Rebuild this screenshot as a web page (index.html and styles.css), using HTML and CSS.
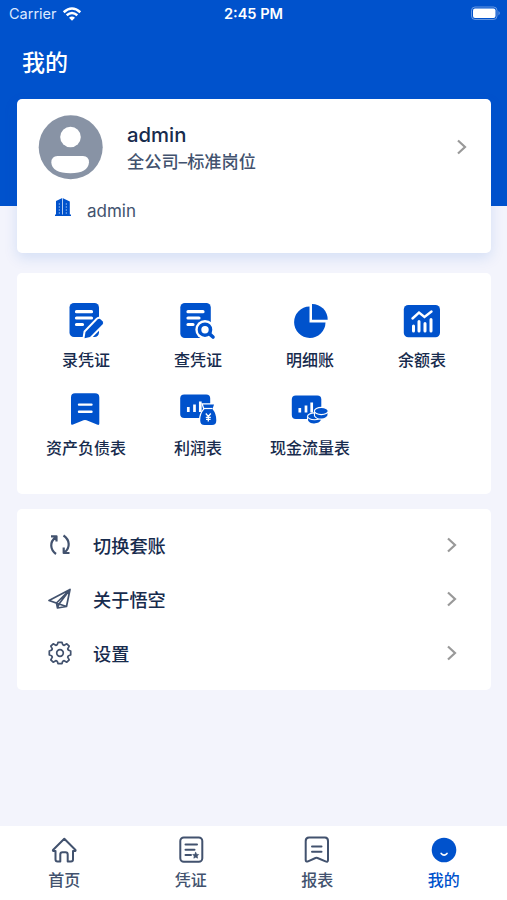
FILE: index.html
```html
<!DOCTYPE html>
<html lang="zh-CN">
<head>
<meta charset="utf-8">
<meta name="viewport" content="width=device-width, initial-scale=1">
<title>我的</title>
<link rel="stylesheet" href="styles.css">
</head>
<body>
<div class="screen">
  <div class="status">
    <div class="carrier"><span>Carrier</span>
      <svg width="20" height="16" viewBox="61 5 20 16" fill="none" stroke="#fff" stroke-width="2.5"><path d="M62.7 11.3Q71 3.8 79.300 11.300M65.700 14.300Q71 9.700 76.300 14.300"/><path d="M68 16.700Q71 14.300 74 16.700L71 19.700Z" fill="#fff" stroke="none"/></svg>
    </div>
    <div class="time">2:45 PM</div>
    <svg class="battery" width="31" height="15" viewBox="470 6 31 15"><rect x="471.500" y="7" width="25.500" height="12.500" rx="3.500" fill="none" stroke="#fff" stroke-opacity=".4"/><rect x="473" y="8.500" width="22.500" height="9.500" rx="2" fill="#fff"/><path d="M498.500 11Q501 13 498.500 15.500Z" fill="#fff" fill-opacity=".45"/></svg>
  </div>
  <h1 class="title">我的</h1>

  <section class="card profile">
    <div class="person">
      <svg class="avatar" width="66" height="66" viewBox="38 114 66 66"><circle cx="70.700" cy="147.300" r="32" fill="#8893a5"/><circle cx="70.500" cy="137" r="10.300" fill="#fff"/><path d="M57.500 156H83Q89 156 89 162.500Q88 173.200 70.500 173.200Q52 173.200 51.300 162.500Q51.500 156 57.500 156Z" fill="#fff"/></svg>
      <div class="who"><div class="name">admin</div><div class="role">全公司–标准岗位</div></div>
      <svg class="chev" width="14" height="18" viewBox="0 0 14 18"><path d="M3 2.500L10 9L3 15.500"/></svg>
    </div>
    <div class="company">
      <svg width="18" height="20" viewBox="54 197 18 20" fill="#0052cc"><path d="M56 215.500V201L62.300 198V215.500ZM63 215.500V198.200L69.800 201.500V215.500Z"/><path d="M55 214.500H71V216H55Z"/><path d="M59.300 203V214M66.300 203V214" stroke="#8db5f0" stroke-width=".8" stroke-dasharray="2 1"/></svg>
      <span>admin</span>
    </div>
  </section>

  <section class="card apps">
    <div class="app"><svg viewBox="66 301 40 40"><rect x="69.500" y="303" width="29.500" height="34" rx="4.500" fill="#0052cc"/><path d="M76.500 311.700H91.500M76.500 318H91.500M76.500 324.500H82.500" stroke="#fff" stroke-width="3.200" stroke-linecap="round"/><path d="M84.500 338.300L85.500 332L97.500 319.500Q99.300 318 101 319.700L102.500 321.300Q104 323 102.400 324.600L90 337Z" fill="#0052cc" stroke="#fff" stroke-width="4" paint-order="stroke"/></svg><span>录凭证</span></div>
    <div class="app"><svg viewBox="178 301 40 40"><rect x="180.300" y="303" width="30.500" height="35" rx="4.500" fill="#0052cc"/><path d="M188 311.700H203M188 318H199M188 324.500H193" stroke="#fff" stroke-width="3.200" stroke-linecap="round"/><circle cx="205" cy="329.700" r="9.700" fill="#fff"/><path d="M208 333L213 337.300" stroke="#fff" stroke-width="6"/><g fill="none" stroke="#0052cc" stroke-width="3.600" stroke-linecap="round"><circle cx="205" cy="329.700" r="5.500"/><path d="M209.500 333.800L213 337"/></g></svg><span>查凭证</span></div>
    <div class="app"><svg viewBox="290 301 40 40" fill="#0052cc"><path d="M309.500 306.500A15.700 15.700 0 1 0 325.500 322.500H309.500Z"/><path d="M312 304A15.500 15.500 0 0 1 327.700 319.800H312Z"/></svg><span>明细账</span></div>
    <div class="app"><svg viewBox="402 301 40 40"><rect x="403.800" y="305" width="36.200" height="32.300" rx="4.500" fill="#0052cc"/><path d="M412.500 318.500L419 312.500L424.500 317L431.500 311.500" fill="none" stroke="#fff" stroke-width="2.400" stroke-linecap="round"/><path d="M413.500 326V331M419 321.500V331M425 323.500V331M431 319.500V331" stroke="#fff" stroke-width="3" stroke-linecap="round"/></svg><span>余额表</span></div>
    <div class="app"><svg viewBox="66 389 40 40"><path d="M75 393.300H95Q99.300 393.300 99.300 397.500V423.500Q99.300 425.600 97 424.500L86.500 420.300Q85 419.700 83.500 420.300L73 424.500Q71 425.500 71 423.300V397.500Q71 393.300 75 393.300Z" fill="#0052cc"/><path d="M79 404.600H91.500M79 411.800H91.500" stroke="#fff" stroke-width="2.400" stroke-linecap="round"/></svg><span>资产负债表</span></div>
    <div class="app"><svg viewBox="178 389 40 40"><rect x="180.200" y="394.500" width="30" height="23.500" rx="4" fill="#0052cc"/><path d="M188.300 407V412M194.500 404.500V412M200.300 401.500V412" stroke="#fff" stroke-width="2.700"/><path d="M203 404.500H214L212.500 409Q216.500 414 216.300 420.500Q216.300 425 212 425H204.500Q200.300 425 200.200 420.500Q200 414 204.500 409Z" fill="#0052cc" stroke="#fff" stroke-width="2.500" paint-order="stroke"/><path d="M204 408.500H212.500" stroke="#fff" stroke-width="1.200"/><path d="M205.800 413.500L208.300 416.500L210.800 413.500M208.300 416.500V421.500M205.800 417.300H210.800M206 419.400H210.600" fill="none" stroke="#fff" stroke-width="1.300"/></svg><span>利润表</span></div>
    <div class="app"><svg viewBox="290 389 40 40"><rect x="291.800" y="395.500" width="29.500" height="23.500" rx="4" fill="#0052cc"/><path d="M299.800 408V412.500M306 405.500V412.500M311.700 402.500V412.500" stroke="#fff" stroke-width="2.700"/><g fill="#0052cc" stroke="#fff" stroke-width="1.100"><path d="M307.500 416.500V420.500C309 425.500 319.500 425 321.500 420V415Z"/><ellipse cx="314.500" cy="416.300" rx="7" ry="3.400"/><path d="M314.500 411V416C318 421 326 419.500 328 415.500V411Z"/><ellipse cx="321.300" cy="411" rx="6.900" ry="3.600"/></g></svg><span>现金流量表</span></div>
  </section>

  <section class="card menu">
    <div class="item"><svg class="ico swap" viewBox="46 532 28 28"><path d="M56 555C50 550.500 49.500 543 55.500 538.500M51 537.300H56.500V542.500M63.500 536.500C70 541 70.500 548.500 64.500 553.500M63.700 548.500V554H69.500"/></svg><span>切换套账</span><svg class="chev" width="14" height="18" viewBox="0 0 14 18"><path d="M3 2.500L10 9L3 15.500"/></svg></div>
    <div class="item"><svg class="ico" viewBox="46 586 28 28"><path d="M49 601.500L70 590.500L66.500 607.500L59 605ZM49 601.500L56.500 604L70 590.500L59 605L57.500 609L66.500 607.500M56.500 604L57.500 609"/></svg><span>关于悟空</span><svg class="chev" width="14" height="18" viewBox="0 0 14 18"><path d="M3 2.500L10 9L3 15.500"/></svg></div>
    <div class="item"><svg class="ico" viewBox="-14 -14 28 28"><path d="M-2 -10.700H2Q2.500 -7.700 4.200 -7.700L6.800 -9.200L9.200 -6.800L7.700 -4.200Q7.700 -2.500 10.700 -2V2Q7.700 2.500 7.700 4.200L9.200 6.800L6.800 9.200L4.200 7.700Q2.500 7.700 2 10.700H-2Q-2.500 7.700 -4.200 7.700L-6.800 9.200L-9.200 6.800L-7.700 4.200Q-7.700 2.500 -10.700 2V-2Q-7.700 -2.500 -7.700 -4.200L-9.200 -6.800L-6.800 -9.200L-4.200 -7.700Q-2.500 -7.700 -2 -10.700Z"/><circle r="3.300"/></svg><span>设置</span><svg class="chev" width="14" height="18" viewBox="0 0 14 18"><path d="M3 2.500L10 9L3 15.500"/></svg></div>
  </section>

  <nav class="tabs">
    <div class="tab"><svg viewBox="50 836 28 28"><path d="M64.300 838.700L53 850Q52.500 851 54 851H55.500V859.500Q55.500 861.500 57.500 861.500H60.300V854.500Q60.300 852.300 62.500 852.300H65.500Q67.700 852.300 67.700 854.500V861.500H71Q73 861.500 73 859.500V851H74.500Q76 851 75.500 850Z"/></svg><span>首页</span></div>
    <div class="tab"><svg viewBox="176 836 28 28"><rect x="179.300" y="837.500" width="22" height="24.300" rx="3.500"/><path d="M184.500 844.500H196M184.500 849.700H193.500M184.500 855H190"/><path d="M194.700 852.300L195.600 854.300L197.700 854.500L196.200 856L196.600 858.200L194.700 857.200L192.800 858.200L193.200 856L191.700 854.500L193.800 854.300Z" fill="#42526e" stroke-width=".6"/></svg><span>凭证</span></div>
    <div class="tab"><svg viewBox="303 836 28 28"><path d="M309 837.500H325Q328 837.500 328 841V860Q328 862.500 325.500 861.300L317.500 858Q316.500 857.600 315.500 858L308 861.300Q305.700 862.300 305.700 860V841Q305.700 837.500 309 837.500Z"/><path d="M312 846.500H321.500M312 851.700H321.500"/></svg><span>报表</span></div>
    <div class="tab active"><svg viewBox="429.500 836 28 28"><circle cx="443.500" cy="850" r="12.300" fill="#0052cc" stroke="none"/><path d="M440.700 853.500Q443.600 856.700 446.500 853.500" stroke="#fff" stroke-width="1.700"/></svg><span>我的</span></div>
  </nav>
</div>
</body>
</html>
```

FILE: styles.css
```css
* { box-sizing: border-box; }

body {
  margin: 0;
  font-family: Inter, "Noto Sans CJK SC", sans-serif;
  font-weight: 500;
  color: #172b4d;
}

svg { display: block; flex: none; }

.screen {
  display: flex;
  flex-direction: column;
  height: 900px;
  background: linear-gradient(#0052cc 206px, #f3f4fc 206px);
}

.status {
  display: grid;
  grid-template-columns: 1fr auto 1fr;
  align-items: center;
  height: 27px;
  padding: 0 6px 0 9px;
  color: #fff;
  font-size: 14.5px;
  line-height: 20px;
}
.carrier { display: flex; align-items: center; gap: 5px; font-weight: 400; color: #dce9ff; }
.time { margin-left: -3px; font-size: 14.6px; font-weight: 600; }
.battery { justify-self: end; }

.title {
  margin: 18px 0 0 22px;
  height: 35px;
  font-size: 23px;
  line-height: 36px;
  font-weight: 500;
  color: #fff;
}

.card {
  margin: 0 16px 0 17px;
  background: #fff;
  border-radius: 5px;
}

.profile {
  margin-top: 18.5px;
  height: 154px;
  padding: 15.5px 22px 0 21px;
  box-shadow: 0 5px 14px rgba(0, 82, 204, .13);
}
.person { display: flex; align-items: center; }
.who { flex: 1; padding: 3px 0 0 23px; }
.name { font-size: 20.3px; line-height: 26px; }
.role { font-size: 17.2px; line-height: 27px; color: #42526e; font-weight: 500; }
.company {
  display: flex;
  align-items: flex-start;
  gap: 15px;
  padding: 17px 0 0 16px;
  font-size: 17px;
  line-height: 28px;
  font-weight: 400;
  color: #42526e;
}

.chev { fill: none; stroke: #999; stroke-width: 2.2; }

.apps {
  display: grid;
  grid-template-columns: repeat(4, 112px);
  grid-auto-rows: 88px;
  margin-top: 20px;
  height: 221px;
  padding: 28px 13px 0;
}
.app {
  display: flex;
  flex-direction: column;
  align-items: center;
  gap: 7px;
  font-size: 16px;
  line-height: 24px;
  white-space: nowrap;
}
.app svg { width: 40px; height: 40px; }

.menu { margin-top: 15px; height: 181px; padding: 9px 32px 0 29px; }
.item { display: flex; align-items: center; height: 54px; font-size: 18.2px; line-height: 28px; }
.item span { flex: 1; padding: 2px 0 0 19px; }
.ico {
  width: 28px;
  height: 28px;
  fill: none;
  stroke: #42526e;
  stroke-width: 1.7;
  stroke-linejoin: round;
}
.swap { stroke-width: 2.2; }

.tabs {
  display: grid;
  grid-template-columns: repeat(4, 1fr);
  height: 74px;
  margin-top: auto;
  padding: 10px 0 0 1px;
  background: #fff;
}
.tab {
  display: flex;
  flex-direction: column;
  align-items: center;
  gap: 4px;
  font-size: 16px;
  line-height: 24px;
  color: #42526e;
}
.tab svg {
  width: 28px;
  height: 28px;
  fill: none;
  stroke: #42526e;
  stroke-width: 2;
  stroke-linejoin: round;
  stroke-linecap: round;
}
.active { color: #0052cc; }
```
